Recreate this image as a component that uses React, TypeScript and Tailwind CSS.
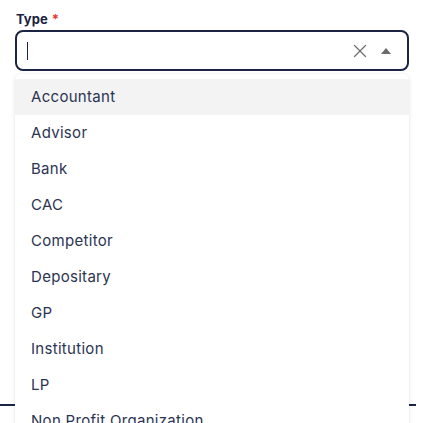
import { X } from "lucide-react";

const types = [
	"Accountant",
	"Advisor",
	"Bank",
	"CAC",
	"Competitor",
	"Depositary",
	"GP",
	"Institution",
	"LP",
	"Non Profit Organization",
	"Other",
];

export default function App() {
	return (
		<div className="h-[423px] w-[423px] overflow-hidden bg-white font-['Inter',sans-serif] text-[#2b3452]">
			<div className="px-[15px] pt-[11px]">
				<label className="flex h-[18px] items-center gap-[4px] pl-px text-[13px] font-bold text-[#1b2340]">
					Type
					<span className="text-[13px] text-[#e53935]">*</span>
				</label>

				<div className="relative mt-[1px] w-[394px]">
					<div className="flex h-[41px] items-center rounded-[8px] border-2 border-[#1b2445] pl-[10px] pr-[16px]">
						<span className="h-[18px] w-px bg-[#1b2340]" />
						<div className="flex-1" />
						<X className="mr-[10px] h-[22px] w-[22px] text-[#6f6f6f]" strokeWidth={1.4} />
						<svg width="10" height="6" viewBox="0 0 10 6" className="fill-[#6b6b6b]">
							<path d="M0 6 L5 0 L10 6 Z" />
						</svg>
					</div>

					<ul className="absolute left-0 right-0 top-[44px] z-10 rounded-[6px] bg-white pt-[5px] shadow-[0_1px_4px_rgba(0,0,0,0.12)]">
						{types.map((t, i) => (
							<li
								key={t}
								className={
									i === 0
										? "flex h-[36px] items-center bg-[#f3f3f3] pl-[16px] text-[15px] tracking-[0.3px]"
										: "flex h-[36px] items-center pl-[16px] text-[15px] tracking-[0.3px]"
								}
							>
								{t}
							</li>
						))}
					</ul>
				</div>
			</div>

			<div className="mt-[333px] h-[2px] w-[416px] bg-[#1b2445]" />
		</div>
	);
}
